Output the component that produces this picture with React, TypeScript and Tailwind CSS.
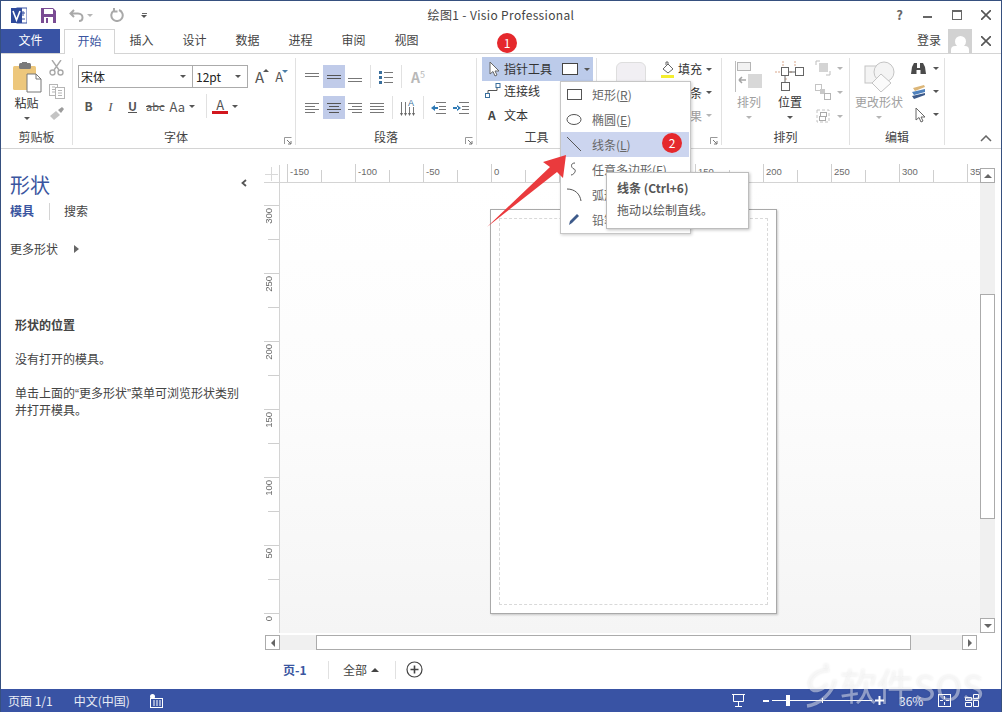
import React from 'react';

const Caret = ({ light = false, className = '' }: { light?: boolean; className?: string }) => (
  <span className={`inline-block w-0 h-0 border-x-[3px] border-x-transparent border-t-[3px] ${light ? 'border-t-[#b5b5b5]' : 'border-t-[#555]'} ${className}`} />
);

const Launcher = () => (
  <svg width="8" height="8" viewBox="0 0 8 8" className="shrink-0">
    <path d="M0.5 7V.5H7.5" fill="none" stroke="#999" />
    <path d="M3 3L7 7M7 4V7H4" fill="none" stroke="#777" />
  </svg>
);

// paragraph lines, each row = [y, x1, x2]
const Lines = ({ rows, color = '#777', w = 15, h = 13 }: { rows: [number, number, number][]; color?: string; w?: number; h?: number }) => (
  <svg width={w} height={h} viewBox={`0 0 ${w} ${h}`}>
    {rows.map(([y, a, b], i) => (
      <path key={i} d={`M${a} ${y + 0.5}H${b}`} stroke={color} />
    ))}
  </svg>
);

const Group = ({ width, label, launcher, children, labelPr = 0 }: { width: number; label: string; launcher?: boolean; children: React.ReactNode; labelPr?: number }) => (
  <div className="flex flex-col shrink-0 border-r border-[#e1e1e1] h-[87px]" style={{ width }}>
    <div className="h-[71px] flex">{children}</div>
    <div className="h-[16px] flex items-center justify-center relative" style={{ paddingRight: labelPr }}>
      <span className="text-[12px] leading-[16px] text-[#444]">{label}</span>
      {launcher && (
        <span className="absolute right-[3px] bottom-[0px]">
          <Launcher />
        </span>
      )}
    </div>
  </div>
);

const Tab = ({ children }: { children: React.ReactNode }) => (
  <div className="w-[53px] text-center text-[12px] leading-[22px] text-[#444]">{children}</div>
);

const Clipboard = () => (
  <svg width="30" height="31" viewBox="0 0 30 31">
    <rect x="1" y="4" width="23" height="24" rx="1.5" fill="#edc77c" />
    <rect x="7" y="1" width="12" height="6" rx="1.5" fill="#7a7a7a" />
    <rect x="10" y="0" width="5" height="3" fill="#7a7a7a" />
    <path d="M15 12H24L29 17V30H15Z" fill="#fff" stroke="#777" />
    <path d="M24 12V17H29" fill="none" stroke="#777" />
  </svg>
);

const Scissors = () => (
  <svg width="15" height="16" viewBox="0 0 15 16" fill="none" stroke="#a9a9a9" strokeWidth="1.4">
    <path d="M3 0L10 10M12 0L5 10" />
    <circle cx="3.5" cy="12.5" r="2.5" />
    <circle cx="11.5" cy="12.5" r="2.5" />
  </svg>
);

const CopyIcon = () => (
  <svg width="16" height="15" viewBox="0 0 16 15" fill="#fff" stroke="#b5b5b5">
    <rect x="0.5" y="0.5" width="8" height="11" />
    <path d="M3 3H6M3 5.5H6M3 8H6" />
    <rect x="6.5" y="3.5" width="9" height="11" />
    <path d="M9 6.5H13M9 9H13M9 11.5H13" />
  </svg>
);

const Brush = () => (
  <svg width="16" height="14" viewBox="0 0 16 14">
    <path d="M1 9L7 4L11 8L5 13Z" fill="#c4c4c4" />
    <path d="M9 3L12 6L15 2L13 0Z" fill="#9c9c9c" />
  </svg>
);

const PointerIcon = ({ color = '#fff', w = 11, h = 16 }: { color?: string; w?: number; h?: number }) => (
  <svg width={w} height={h} viewBox="0 0 11 16">
    <path d="M1 1V13L4 10.5L6 15L8 14L6 10H10Z" fill={color} stroke="#666" />
  </svg>
);

const Pt = ({ children, dim = false }: { children: React.ReactNode; dim?: boolean }) => (
  <span className={`block text-[12px] leading-[16px] whitespace-nowrap ${dim ? 'text-[#a0a0a0]' : 'text-[#333]'}`}>{children}</span>
);

const Ribbon = () => (
  <div className="flex h-[95px] shrink-0 border-b border-[#d4d4d4] pt-[4px] pl-[1px] bg-white">
    {/* 剪贴板 */}
    <Group width={72} label="剪贴板">
      <div className="w-[48px] flex flex-col items-center pt-[4px] pl-[3px]">
        <Clipboard />
        <span className="text-[12px] leading-[16px] text-[#333] mt-[2px]">粘贴</span>
        <Caret className="mt-[6px]" />
      </div>
      <div className="flex flex-col items-start gap-[8px] pt-[2px]">
        <Scissors />
        <CopyIcon />
        <Brush />
      </div>
    </Group>

    {/* 字体 */}
    <Group width={223} label="字体" launcher labelPr={16}>
      <div className="flex flex-col pl-[5px] pt-[7px]">
        <div className="flex items-center h-[23px]">
          <div className="w-[115px] h-[23px] border border-[#ababab] flex items-center justify-between pl-[2px] pr-[6px] text-[12px] text-[#222]">
            宋体
            <Caret />
          </div>
          <div className="w-[55px] h-[23px] border border-l-0 border-[#ababab] flex items-center justify-between pl-[3px] pr-[6px] text-[12px] text-[#222]">
            12pt
            <Caret />
          </div>
          <span className="ml-[7px] text-[15px] leading-[20px] text-[#555] relative">A<span className="absolute -right-[5px] top-[2px] w-0 h-0 border-x-[3px] border-x-transparent border-b-[3px] border-b-[#555]" /></span>
          <span className="ml-[11px] text-[13px] leading-[20px] text-[#555] relative">A<span className="absolute -right-[5px] top-[3px] w-0 h-0 border-x-[3px] border-x-transparent border-t-[3px] border-t-[#4a7ea8]" /></span>
        </div>
        <div className="flex items-center h-[24px] mt-[6px] text-[#555]">
          <span className="w-[15px] ml-[3px] text-center text-[12px] font-bold leading-none">B</span>
          <span className="w-[15px] ml-[7px] text-center text-[13px] italic font-medium leading-none" style={{ fontFamily: '"Liberation Serif", serif' }}>I</span>
          <span className="w-[15px] ml-[7px] text-center text-[12px] font-bold underline leading-none">U</span>
          <span className="ml-[6px] text-[11px] line-through leading-none">abc</span>
          <span className="ml-[5px] text-[13px] leading-none">Aa</span>
          <Caret className="ml-[4px]" />
          <span className="ml-[11px] w-px h-[24px] bg-[#e1e1e1]" />
          <span className="ml-[5px] w-[16px] flex flex-col items-center">
            <span className="text-[13px] leading-[13px] text-[#555]">A</span>
            <span className="w-[16px] h-[3px] bg-[#d2171e]" />
          </span>
          <Caret className="ml-[4px]" />
        </div>
      </div>
    </Group>

    {/* 段落 */}
    <Group width={181} label="段落" launcher>
      <div className="flex flex-col pl-[9px] pt-[7px]">
        <div className="flex items-center h-[23px]">
          <Lines rows={[[3, 0, 14], [6, 0, 14]]} />
          <span className="ml-[3px] w-[22px] h-[23px] bg-[#c0cbe9] flex items-center justify-center"><Lines rows={[[5, 0, 14], [8, 0, 14]]} color="#555" /></span>
          <span className="ml-[3px]"><Lines rows={[[8, 0, 14], [11, 0, 14]]} /></span>
          <span className="ml-[7px] w-px h-[23px] bg-[#e1e1e1]" />
          <svg width="14" height="14" viewBox="0 0 14 14" className="ml-[8px]">
            <path d="M5 2.5H14M5 7.5H14M5 12.5H14" stroke="#777" />
            <path d="M0 1H3V4H0ZM0 6H3V9H0ZM0 11H3V14H0Z" fill="#3a6f9c" />
          </svg>
          <span className="ml-[8px] w-px h-[23px] bg-[#e1e1e1]" />
          <span className="ml-[9px] text-[14px] font-bold text-[#b8b8b8] leading-none">A<sup className="text-[9px] font-normal">5</sup></span>
        </div>
        <div className="flex items-center h-[23px] mt-[8px]">
          <Lines rows={[[2, 0, 14], [5, 0, 10], [8, 0, 14], [11, 0, 10]]} />
          <span className="ml-[3px] w-[22px] h-[23px] bg-[#c0cbe9] flex items-center justify-center"><Lines rows={[[2, 0, 14], [5, 2, 12], [8, 0, 14], [11, 2, 12]]} color="#555" /></span>
          <span className="ml-[3px]"><Lines rows={[[2, 0, 14], [5, 4, 14], [8, 0, 14], [11, 4, 14]]} /></span>
          <span className="ml-[7px]"><Lines rows={[[2, 0, 14], [5, 0, 14], [8, 0, 14], [11, 0, 14]]} /></span>
          <span className="ml-[7px] w-px h-[23px] bg-[#e1e1e1]" />
          <svg width="16" height="19" viewBox="0 0 16 19" className="ml-[7px]">
            <path d="M1.5 4V17M5.5 4V17M9.5 9V17M13.5 9V17" stroke="#777" />
            <path d="M0 15L1.5 18L3 15M4 15L5.5 18L7 15M8 15L9.5 18L11 15M12 15L13.5 18L15 15" fill="#666" />
            <text x="8" y="8" fontSize="9" fill="#3a6f9c" fontFamily="Liberation Sans">A</text>
          </svg>
          <span className="ml-[7px] w-px h-[23px] bg-[#e1e1e1]" />
          <svg width="15" height="12" viewBox="0 0 15 12" className="ml-[7px]">
            <path d="M5 .5H15M8 4.5H15M8 7.5H15M5 11.5H15" stroke="#777" />
            <path d="M0 6L4 3V9Z M3 5H7V7H3Z" fill="#2f7ab5" />
          </svg>
          <svg width="16" height="12" viewBox="0 0 16 12" className="ml-[7px]">
            <path d="M6 .5H16M9 4.5H16M9 7.5H16M6 11.5H16" stroke="#777" />
            <path d="M8 6L4 3V9Z M0 5H5V7H0Z" fill="#2f7ab5" />
          </svg>
        </div>
      </div>
    </Group>

    {/* 工具 */}
    <Group width={120} label="工具">
      <div className="flex flex-col pl-[5px] -mt-[1px] w-full">
        <div className="w-[111px] h-[24px] shrink-0 bg-[#bccbea] flex items-center pl-[7px]">
          <PointerIcon color="#fff" />
          <span className="ml-[4px] text-[12px] text-[#333]">指针工具</span>
          <span className="ml-[10px] w-[16px] h-[12px] bg-white border border-[#444]" />
          <Caret className="ml-[6px]" />
        </div>
        <div className="h-[24px] shrink-0 -mt-[3px] pt-[1px] flex items-center pl-[3px]">
          <svg width="16" height="15" viewBox="0 0 16 15" fill="#fff">
            <path d="M3 12V7.5H12V3" fill="none" stroke="#555" />
            <rect x="0.5" y="10.5" width="4" height="4" stroke="#3a6f9c" />
            <rect x="11" y="0.5" width="4" height="4" stroke="#3a6f9c" />
          </svg>
          <span className="ml-[3px] text-[12px] text-[#333]">连接线</span>
        </div>
        <div className="h-[23px] shrink-0 mt-[1px] flex items-center pl-[6px]">
          <span className="w-[13px] text-[12px] font-semibold text-[#444]">A</span>
          <span className="ml-[3px] text-[12px] text-[#333]">文本</span>
        </div>
      </div>
    </Group>

    {/* 形状样式 */}
    <Group width={125} label="形状样式" launcher>
      <div className="flex pl-[19px] pt-[4px]">
        <div className="w-[30px] h-[28px] rounded-[6px] bg-[#f1eff3] border border-[#dedede]" />
        <div className="ml-[14px] flex flex-col -mt-[5px]">
          <div className="h-[24px] shrink-0 flex items-center">
            <svg width="17" height="17" viewBox="0 0 17 17">
              <path d="M3 8L8 3L13 8L8 12Z" fill="#fff" stroke="#666" />
              <path d="M6 4V1H8V3" fill="none" stroke="#666" />
              <rect x="1" y="14" width="13" height="3" fill="#f4ee2f" />
            </svg>
            <span className="ml-[1px]"><Pt>填充</Pt></span>
            <Caret className="ml-[4px]" />
          </div>
          <div className="h-[23px] shrink-0 flex items-center pl-[18px]">
            <Pt>线条</Pt>
            <Caret className="ml-[4px]" />
          </div>
          <div className="h-[23px] shrink-0 flex items-center pl-[18px]">
            <Pt dim>效果</Pt>
            <Caret light className="ml-[4px]" />
          </div>
        </div>
      </div>
    </Group>

    {/* 排列 */}
    <Group width={128} label="排列">
      <div className="flex pl-[13px] pt-[3px]">
        <div className="w-[28px] flex flex-col items-center">
          <svg width="28" height="31" viewBox="0 0 28 31">
            <path d="M.5 0V31" stroke="#bdbdbd" />
            <rect x="2.5" y="1.5" width="13" height="8" fill="#f2f2f2" stroke="#b5b5b5" />
            <rect x="13" y="13" width="14" height="14" fill="#d8d8d8" />
            <path d="M4 19H11M4 19L7 16M4 19L7 22" fill="none" stroke="#a5a5a5" strokeWidth="1.6" />
          </svg>
          <span className="mt-[2px]"><Pt dim>排列</Pt></span>
          <Caret light className="mt-[6px]" />
        </div>
        <div className="ml-[12px] w-[30px] flex flex-col items-center">
          <svg width="30" height="31" viewBox="0 0 30 31" fill="#fff">
            <path d="M8 0V5M20 0V5M0 11H6M12 11H17M11 17V20" stroke="#d9a78c" strokeDasharray="2 1" />
            <rect x="6.5" y="6.5" width="7" height="8" stroke="#666" />
            <rect x="20.5" y="6.5" width="8" height="8" stroke="#666" />
            <rect x="6.5" y="21.5" width="8" height="8" stroke="#666" />
            <path d="M13 11H21M10 15V22" stroke="#666" />
          </svg>
          <span className="mt-[2px]"><Pt>位置</Pt></span>
          <Caret className="mt-[6px]" />
        </div>
        <div className="ml-[10px] flex flex-col gap-[8px] -mt-[1px]">
          <div className="flex items-center">
            <svg width="16" height="16" viewBox="0 0 16 16" fill="none">
              <rect x="4" y="3" width="9" height="9" fill="#d4d4d4" />
              <path d="M5 1H1V5M11 15H15V11" stroke="#bdbdbd" />
            </svg>
            <Caret light className="ml-[6px]" />
          </div>
          <div className="flex items-center">
            <svg width="16" height="16" viewBox="0 0 16 16" fill="#fff">
              <rect x="0.5" y="0.5" width="6" height="6" stroke="#c4c4c4" />
              <rect x="5" y="5" width="5" height="5" fill="#c9c9c9" />
              <rect x="9.5" y="9.5" width="6" height="6" stroke="#b5b5b5" />
            </svg>
            <Caret light className="ml-[6px]" />
          </div>
          <div className="flex items-center">
            <svg width="16" height="16" viewBox="0 0 16 16" fill="#fff">
              <path d="M2 2H14V14H2Z" fill="none" stroke="#c4c4c4" strokeDasharray="3 2" />
              <rect x="5.5" y="4.5" width="6" height="4" stroke="#aaa" />
              <rect x="4.5" y="8.5" width="6" height="4" stroke="#aaa" />
            </svg>
            <Caret light className="ml-[6px]" />
          </div>
        </div>
      </div>
    </Group>

    {/* 编辑 */}
    <Group width={95} label="编辑">
      <div className="flex pl-[5px] pt-[3px]">
        <div className="w-[48px] flex flex-col items-center">
          <svg width="31" height="31" viewBox="0 0 31 31" fill="#f4f4f4" stroke="#c4c4c4">
            <rect x="1" y="5" width="17" height="17" />
            <circle cx="20" cy="11" r="10" />
            <path d="M17 13L27 22L17 31L8 22Z" fill="#fbfbfb" />
          </svg>
          <span className="mt-[2px]"><Pt dim>更改形状</Pt></span>
          <Caret light className="mt-[6px]" />
        </div>
        <div className="ml-[8px] flex flex-col -mt-[4px]">
          <div className="h-[23px] shrink-0 flex items-center">
            <svg width="15" height="14" viewBox="0 0 15 14" fill="#4a4a4a">
              <path d="M1 5L3 1H6V6H9V1H12L14 5L15 12H9.5V8H5.5V12H0Z" />
            </svg>
            <Caret className="ml-[7px]" />
          </div>
          <div className="h-[23px] shrink-0 flex items-center">
            <svg width="15" height="14" viewBox="0 0 15 14">
              <path d="M2 3L13 0L14 2L4 6Z" fill="#dcb678" />
              <path d="M1 7L14 4L14 7L3 10Z" fill="#4f81bd" />
              <path d="M1 11L14 8L14 10L3 14Z" fill="#3d5a8a" />
            </svg>
            <Caret className="ml-[7px]" />
          </div>
          <div className="h-[23px] shrink-0 flex items-center pl-[4px]">
            <PointerIcon color="#fff" />
            <Caret className="ml-[7px]" />
          </div>
        </div>
      </div>
    </Group>

    <div className="flex-1 flex items-end justify-end pr-[10px] pb-[6px]">
      <svg width="12" height="7" viewBox="0 0 12 7" fill="none" stroke="#666" strokeWidth="1.5">
        <path d="M1 6L6 1L11 6" />
      </svg>
    </div>
  </div>
);

const Sidebar = () => (
  <div className="w-[263px] shrink-0 flex flex-col pl-[9px] pt-[20px] relative">
    <div className="flex items-center justify-between pr-[17px]">
      <span className="text-[20px] leading-[32px] text-[#3a55a0]">形状</span>
      <svg width="6" height="8" viewBox="0 0 6 8" fill="none" stroke="#555" strokeWidth="1.8" className="-mt-[4px]">
        <path d="M5 1L1.5 4L5 7" />
      </svg>
    </div>
    <div className="flex items-center mt-[1px] h-[18px]">
      <span className="text-[12px] font-bold text-[#3a55a0]">模具</span>
      <span className="ml-[15px] w-px h-[17px] bg-[#d4d4d4]" />
      <span className="ml-[14px] text-[12px] text-[#444]">搜索</span>
    </div>
    <div className="flex items-center mt-[20px] h-[18px]">
      <span className="text-[12px] text-[#444]">更多形状</span>
      <span className="ml-[16px] w-0 h-0 border-y-[4px] border-y-transparent border-l-[5px] border-l-[#666]" />
    </div>
    <div className="pl-[5px] mt-[58px] text-[12px] leading-[17px] text-[#444]">
      <div className="font-bold">形状的位置</div>
      <div className="mt-[17px]">没有打开的模具。</div>
      <div className="mt-[17px] h-[17px]">
        单击上面的<span className="font-['Liberation_Sans']">“</span>更多形状<span className="font-['Liberation_Sans']">”</span>菜单可浏览形状类别
      </div>
      <div>并打开模具。</div>
    </div>
  </div>
);

const hTicks = [-150, null, -100, null, -50, null, 0, null, 50, null, 100, null, 150, null, 200, null, 250, null, 300, null];
const vTicks = [300, null, 250, null, 200, null, 150, null, 100, null, 50, null, 0];

const Ruler = () => (
  <div className="h-[34px] shrink-0 flex items-end border-b border-[#d4d4d4] relative">
    <div className="w-[16px] h-[17px] shrink-0 border-r border-[#d4d4d4] flex items-center justify-center relative">
      <span className="absolute left-[1px] right-[1px] top-[9px] h-px bg-[#d9d9d9]" />
      <span className="absolute top-[2px] bottom-[1px] left-[7px] w-px bg-[#d9d9d9]" />
    </div>
    <div className="flex-1 flex items-end overflow-hidden pl-[7px] h-[18px] font-['Liberation_Sans']">
      {hTicks.map((t, i) =>
        t === null ? (
          <div key={i} className="w-[34px] shrink-0 border-l border-[#cfcfcf] h-[12px]" />
        ) : (
          <div key={i} className="w-[34px] shrink-0 border-l border-[#cfcfcf] h-full text-[9.5px] leading-[15px] pl-[2px] text-[#6a6a6a] whitespace-nowrap">
            {t}
          </div>
        )
      )}
      <div className="w-[15px] shrink-0 border-l border-[#cfcfcf] h-full text-[9.5px] leading-[15px] pl-[2px] text-[#6a6a6a] overflow-hidden">35</div>
    </div>
  </div>
);

const VRuler = () => (
  <div className="w-[16px] shrink-0 border-r border-[#d4d4d4] pt-[22px] overflow-hidden font-['Liberation_Sans']">
    {vTicks.map((t, i) =>
      t === null ? (
        <div key={i} className="h-[34px] ml-[4px] border-t border-[#cfcfcf]" />
      ) : (
        <div key={i} className="h-[34px] border-t border-[#cfcfcf] relative">
          <span className="absolute left-0 top-[2px] text-[9.5px] leading-[10px] text-[#6a6a6a] [writing-mode:vertical-rl] rotate-180">{t}</span>
        </div>
      )
    )}
  </div>
);

const Canvas = () => (
  <div className="flex-1 bg-gradient-to-b from-white via-[#fcfcfc] to-[#f5f5f5] pl-[210px] pt-[26px]">
    <div className="w-[287px] h-[405px] bg-white border border-[#a9a9a9] shadow-[1px_1px_2px_rgba(0,0,0,0.2)] p-[8px]">
      <div className="h-full border border-dashed border-[#d9d9d9]" />
    </div>
  </div>
);

const ScrollBtn = ({ dir }: { dir: 'up' | 'down' | 'left' | 'right' }) => (
  <div className="w-[15px] h-[15px] shrink-0 bg-white border border-[#ababab] flex items-center justify-center">
    {dir === 'up' && <span className="w-0 h-0 border-x-[4px] border-x-transparent border-b-[4px] border-b-[#666]" />}
    {dir === 'down' && <span className="w-0 h-0 border-x-[4px] border-x-transparent border-t-[4px] border-t-[#666]" />}
    {dir === 'left' && <span className="w-0 h-0 border-y-[4px] border-y-transparent border-r-[4px] border-r-[#666]" />}
    {dir === 'right' && <span className="w-0 h-0 border-y-[4px] border-y-transparent border-l-[4px] border-l-[#666]" />}
  </div>
);

const Workspace = () => (
  <div className="flex-1 flex flex-col min-w-0">
    <div className="flex h-[484px]">
      <div className="flex-1 flex flex-col min-w-0">
        <Ruler />
        <div className="flex flex-1 min-h-0">
          <VRuler />
          <Canvas />
        </div>
      </div>
      <div className="w-[15px] shrink-0 mr-[7px] mt-[19px] flex flex-col bg-[#f0f0f0]">
        <ScrollBtn dir="up" />
        <div className="h-[111px]" />
        <div className="h-[225px] bg-white border border-[#ababab]" />
        <div className="flex-1" />
        <ScrollBtn dir="down" />
      </div>
    </div>
    <div className="flex h-[15px] mt-[2px] ml-[1px] w-[712px] bg-[#f0f0f0]">
      <ScrollBtn dir="left" />
      <div className="w-[36px]" />
      <div className="w-[595px] bg-white border border-[#ababab]" />
      <div className="flex-1" />
      <ScrollBtn dir="right" />
    </div>
    <div className="flex-1 flex items-center pl-[19px]">
      <span className="w-[24px] text-[12px] font-bold text-[#3a55a0] whitespace-nowrap">页-1</span>
      <span className="ml-[21px] w-px h-[18px] bg-[#e1e1e1]" />
      <span className="ml-[14px] text-[12px] text-[#444]">全部</span>
      <span className="ml-[4px] w-0 h-0 border-x-[4px] border-x-transparent border-b-[4px] border-b-[#444]" />
      <span className="ml-[16px] w-px h-[18px] bg-[#e1e1e1]" />
      <svg width="17" height="17" viewBox="0 0 17 17" fill="none" stroke="#444" className="ml-[10px]">
        <circle cx="8.5" cy="8.5" r="7.5" strokeWidth="1.2" />
        <path d="M8.5 4.5V12.5M4.5 8.5H12.5" strokeWidth="1.6" />
      </svg>
    </div>
  </div>
);

const StatusBar = () => (
  <div className="h-[23px] shrink-0 bg-[#3953a4] flex items-center pl-[8px] text-[12px] text-white/90 relative">
    <span>页面 1/1</span>
    <span className="ml-[21px]">中文(中国)</span>
    <svg width="14" height="14" viewBox="0 0 14 14" className="ml-[19px]">
      <rect x="1.5" y="4.5" width="12" height="9" fill="none" stroke="#fff" />
      <circle cx="3.5" cy="2.5" r="2.5" fill="#fff" />
      <path d="M4 7H12M4 9H12M4 11H12" stroke="#fff" strokeDasharray="2 1" />
    </svg>
    <div className="ml-auto flex items-center pr-[23px]">
      <svg width="15" height="15" viewBox="0 0 15 15" fill="none" stroke="#fff">
        <path d="M1 1.5H14M2.5 1.5V8.5H12.5V1.5M7.5 8.5V13M4 13.5H11" />
      </svg>
      <span className="ml-[17px] w-[6px] h-[2px] bg-white" />
      <div className="ml-[3px] w-[100px] h-px bg-white relative">
        <span className="absolute left-[14px] -top-[5px] w-[4px] h-[11px] bg-white" />
        <span className="absolute left-[50px] -top-[2px] w-px h-[5px] bg-white" />
      </div>
      <svg width="9" height="9" viewBox="0 0 9 9" stroke="#fff" strokeWidth="2" className="ml-[3px]">
        <path d="M0 4.5H9M4.5 0V9" />
      </svg>
      <span className="ml-[15px] w-[26px] leading-[16px]">36%</span>
      <svg width="13" height="13" viewBox="0 0 13 13" fill="none" stroke="#fff" className="ml-[13px]">
        <rect x="0.5" y="0.5" width="12" height="12" />
        <path d="M6.5 2V5M6.5 8V11M2 6.5H5M8 6.5H11" />
      </svg>
      <svg width="14" height="13" viewBox="0 0 14 13" fill="none" stroke="#fff" className="ml-[14px]">
        <path d="M.5 3.5H6.5V6.5H.5ZM.5 8.5H6.5V12.5H.5ZM8.5 6.5H13.5V12.5H8.5ZM8.5.5H13.5V4.5H8.5Z" />
      </svg>
    </div>
  </div>
);

const menuItems = [
  { key: 'R', label: '矩形', icon: <rect x="1.5" y="2.5" width="14" height="10" fill="none" stroke="#555" /> },
  { key: 'E', label: '椭圆', icon: <ellipse cx="8" cy="7.5" rx="7" ry="5" fill="none" stroke="#555" /> },
  { key: 'L', label: '线条', active: true, icon: <path d="M1 0L15 14" stroke="#555" /> },
  { key: 'F', label: '任意多边形', icon: <path d="M9 1C4 1 5 6 8 7C11 8 8 13 5 13" fill="none" stroke="#555" /> },
  { key: 'A', label: '弧形', icon: <path d="M1 2C9 2 14 7 15 14" fill="none" stroke="#555" /> },
  { key: 'P', label: '铅笔', icon: <path d="M3 13L4 9L11 2L13 4L6 11Z" fill="#3d5a8a" /> },
];

const ShapeMenu = () => (
  <div className="absolute left-[560px] top-[81px] w-[131px] h-[153px] bg-white border border-[#c6c6c6] shadow-[1px_1px_3px_rgba(0,0,0,0.2)] flex flex-col">
    {menuItems.map(item => (
      <div key={item.key} className={`h-[25px] flex items-center pl-[5px] mr-[1px] ${item.active ? 'bg-[#ccd5ef]' : ''}`}>
        <svg width="16" height="15" viewBox="0 0 16 15">{item.icon}</svg>
        <span className="ml-[10px] text-[12px] text-[#666] whitespace-nowrap">
          {item.label}(<span className="underline">{item.key}</span>)
        </span>
      </div>
    ))}
  </div>
);

const Tooltip = () => (
  <div className="absolute left-[606px] top-[172px] w-[143px] h-[57px] bg-white border border-[#bdbdbd] shadow-[1px_1px_3px_rgba(0,0,0,0.25)] pl-[10px] pt-[6px] text-[12px] text-[#555]">
    <div className="font-bold leading-[18px]">线条 (Ctrl+6)</div>
    <div className="mt-[4px] leading-[18px]">拖动以绘制直线。</div>
  </div>
);

const Badge = ({ n, className }: { n: number; className: string }) => (
  <div className={`absolute w-[20px] h-[20px] rounded-full bg-[#e5282c] text-white text-[12px] leading-[20px] text-center ${className}`}>{n}</div>
);

export default function App() {
  return (
    <div className="w-[1002px] h-[712px] relative overflow-hidden bg-white flex flex-col" style={{ fontFamily: '"Noto Sans CJK SC", "Liberation Sans", sans-serif' }}>
      {/* title bar */}
      <div className="h-[29px] shrink-0 border-t border-[#36507f] flex items-center pl-[11px] relative">
        <svg width="16" height="17" viewBox="0 0 16 17">
          <rect x="6" y="1" width="10" height="15" fill="#fff" stroke="#3953a4" />
          <path d="M12 4V9M10 6H14M10 12H14" stroke="#3953a4" />
          <rect x="0" y="1" width="11" height="15" fill="#2e4a9c" />
          <path d="M2 4L5.5 13L9 4" fill="none" stroke="#fff" strokeWidth="1.6" />
        </svg>
        <svg width="15" height="15" viewBox="0 0 15 15" className="ml-[14px]">
          <path d="M0 0H12L15 3V15H0Z" fill="#7a4b93" />
          <rect x="3" y="1" width="9" height="5" fill="#fff" />
          <rect x="3" y="9" width="9" height="6" fill="#fff" />
          <rect x="5" y="10" width="2" height="5" fill="#7a4b93" />
        </svg>
        <svg width="15" height="13" viewBox="0 0 15 13" fill="none" stroke="#a9a9a9" strokeWidth="2" className="ml-[13px]">
          <path d="M5 1L1.5 4.5L5 8M2 4.5H9C12 4.5 13.5 6.5 13.5 8.5C13.5 10.5 12 12 10 12" />
        </svg>
        <Caret light className="ml-[3px]" />
        <svg width="14" height="14" viewBox="0 0 14 14" fill="none" stroke="#a9a9a9" strokeWidth="2" className="ml-[17px]">
          <path d="M4 2.5A5.7 5.7 0 1 0 9 2M4 0V3.5H7.5" />
        </svg>
        <span className="ml-[17px] flex flex-col items-center gap-[1px]">
          <span className="w-[5px] h-px bg-[#666]" />
          <Caret />
        </span>
        <div className="absolute left-0 right-0 top-0 h-[27px] flex items-center justify-center text-[12px] text-[#444] tracking-[0.35px]">绘图1 - Visio Professional</div>
        <div className="ml-auto flex items-center pr-[11px] text-[#666] relative">
          <span className="text-[13px] font-bold">?</span>
          <span className="ml-[20px] mt-[4px] w-[9px] h-[2px] bg-[#666]" />
          <span className="ml-[20px] w-[10px] h-[10px] border border-[#666] border-t-[2px]" />
          <svg width="10" height="10" viewBox="0 0 10 10" stroke="#555" strokeWidth="1.6" className="ml-[19px]">
            <path d="M0 0L10 10M10 0L0 10" />
          </svg>
        </div>
      </div>

      {/* tabs */}
      <div className="h-[25px] shrink-0 flex items-stretch border-b border-[#d4d4d4] pl-[1px]">
        <div className="w-[59px] bg-[#3953a4] text-white text-[12px] leading-[22px] text-center">文件</div>
        <div className="ml-[4px] w-[51px] h-[25px] bg-white border border-b-0 border-[#d4d4d4] text-[#3a55a0] text-[12px] leading-[22px] text-center">开始</div>
        <Tab>插入</Tab>
        <Tab>设计</Tab>
        <Tab>数据</Tab>
        <Tab>进程</Tab>
        <Tab>审阅</Tab>
        <Tab>视图</Tab>
        <div className="ml-auto flex items-center pr-[11px]">
          <span className="text-[12px] text-[#444] -mt-[2px]">登录</span>
          <div className="ml-[7px] w-[24px] h-[24px] bg-[#d2d2d2] flex flex-col items-center justify-end overflow-hidden">
            <span className="w-[11px] h-[11px] rounded-full bg-white" />
            <span className="w-[18px] h-[7px] -mt-[1px] rounded-t-[4px] bg-white" />
          </div>
          <svg width="10" height="10" viewBox="0 0 10 10" stroke="#555" strokeWidth="1.6" className="ml-[9px]">
            <path d="M0 0L10 10M10 0L0 10" />
          </svg>
        </div>
      </div>

      <Ribbon />

      <div className="flex-1 flex min-h-0 border-l border-[#36507f]">
        <Sidebar />
        <Workspace />
      </div>

      <StatusBar />

      {/* window edges */}
      <div className="absolute left-0 top-0 bottom-0 w-px bg-[#36507f]" />
      <div className="absolute right-0 top-0 bottom-0 w-px bg-[#36507f]" />

      <ShapeMenu />
      <Tooltip />
      <Badge n={1} className="left-[497px] top-[33px]" />
      <Badge n={2} className="left-[662px] top-[133px]" />

      {/* red arrow annotation */}
      <svg width="1002" height="712" className="absolute left-0 top-0 pointer-events-none">
        <path d="M566 155L563 178L557 172L487 227L550 167L543 162Z" fill="#ea3a3d" />
      </svg>

      {/* watermark */}
      <div className="absolute left-[805px] top-[662px] flex items-center text-white/45 drop-shadow-[0_0_1px_rgba(0,0,0,0.2)] pointer-events-none">
        <svg width="34" height="46" viewBox="0 0 34 46" fill="none" stroke="currentColor" strokeWidth="3.5">
          <path d="M24 8C10 8 2 18 6 26C9 31 18 28 22 22M30 18C28 30 16 42 2 44" />
          <circle cx="21" cy="4" r="2.5" fill="currentColor" stroke="none" />
        </svg>
        <span className="ml-[1px] text-[37px] leading-[46px] font-normal whitespace-nowrap">软件<span className="text-[36px]">SOS</span></span>
      </div>
    </div>
  );
}
